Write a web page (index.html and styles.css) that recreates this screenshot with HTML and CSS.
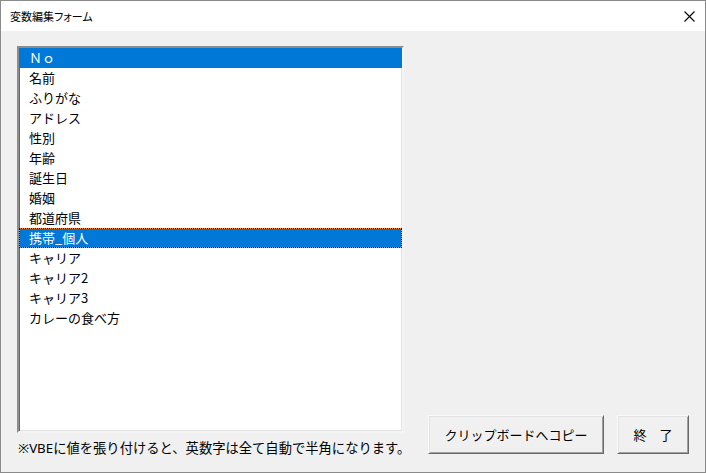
FILE: index.html
```html
<!DOCTYPE html>
<html lang="ja">
<head>
<meta charset="utf-8">
<title>変数編集フォーム</title>
<link rel="stylesheet" href="styles.css">
</head>
<body>
<div class="window">
  <div class="titlebar">
    <span class="title">変数編集フォーム</span>
    <span class="close">
      <svg width="11" height="11" viewBox="0 0 11 11"><path d="M0.5 0.5 L10.5 10.5 M10.5 0.5 L0.5 10.5" stroke="#000" stroke-width="1.1" fill="none"/></svg>
    </span>
  </div>
  <div class="client">
    <div class="left">
      <ul class="listbox">
        <li class="item sel">Ｎｏ</li>
        <li class="item">名前</li>
        <li class="item">ふりがな</li>
        <li class="item">アドレス</li>
        <li class="item">性別</li>
        <li class="item">年齢</li>
        <li class="item">誕生日</li>
        <li class="item">婚姻</li>
        <li class="item">都道府県</li>
        <li class="item sel focus">携帯_個人</li>
        <li class="item">キャリア</li>
        <li class="item">キャリア2</li>
        <li class="item">キャリア3</li>
        <li class="item">カレーの食べ方</li>
      </ul>
      <p class="note">※VBEに値を張り付けると、英数字は全て自動で半角になります。</p>
    </div>
    <div class="right">
      <button class="btn btn-copy">クリップボードへコピー</button>
      <button class="btn btn-end">終　了</button>
    </div>
  </div>
</div>
</body>
</html>
```

FILE: styles.css
```css
* { box-sizing: border-box; }
html, body {
  margin: 0;
  padding: 0;
  background: #f0f0f0;
}
body {
  font-family: "Noto Sans", "Noto Sans CJK JP", sans-serif;
  color: #000;
}
.window {
  width: 706px;
  height: 473px;
  border: 1px solid #8a8a8a;
  background: #f0f0f0;
  display: flex;
  flex-direction: column;
}
.titlebar {
  height: 30px;
  background: #fff;
  display: flex;
  align-items: center;
  justify-content: space-between;
  padding: 0 10px 0 9px;
  flex: none;
}
.title {
  font-size: 11px;
  line-height: 14px;
  font-feature-settings: "palt";
  font-family: "Noto Sans CJK JP", sans-serif;
}
.close {
  display: flex;
  width: 11px;
  height: 11px;
}
.client {
  flex: 1;
  display: flex;
  padding: 15px 0 0 16px;
}
.left {
  display: flex;
  flex-direction: column;
  width: 387px;
}
.listbox {
  list-style: none;
  margin: 0;
  padding: 0;
  width: 387px;
  height: 387px;
  background: #fff;
  border-style: solid;
  border-width: 2px;
  border-color: #8c8c8c #f4f4f4 #f4f4f4 #8c8c8c;
  box-shadow: inset 1px 1px 0 #696969, inset -1px -1px 0 #e3e3e3;
  font-family: "Noto Sans CJK JP", sans-serif;
  font-size: 13px;
}
.item {
  height: 20px;
  line-height: 20px;
  padding-left: 10px;
  white-space: nowrap;
}
.item.sel {
  background: #0078d7;
  color: #fff;
}
.item.focus {
  border: 1px dotted #000;
  line-height: 18px;
  padding-left: 9px;
  background: linear-gradient(#0078d7, #0078d7) padding-box, linear-gradient(#f6882a, #f6882a) border-box;
}
.note {
  margin: 5px 0 0 1px;
  font-family: "Noto Sans", "Noto Sans CJK JP", sans-serif;
  font-size: 13.3px;
  line-height: 20px;
  white-space: nowrap;
}
.right {
  flex: 1;
  display: flex;
  align-items: flex-end;
  padding: 0 16px 18px 24px;
  gap: 13px;
}
.btn {
  height: 39px;
  background: #f0f0f0;
  font-family: "Noto Sans CJK JP", sans-serif;
  font-size: 13px;
  line-height: 1;
  color: #000;
  padding: 0;
  border-style: solid;
  border-width: 1px;
  border-color: #fafafa #696969 #696969 #fafafa;
  box-shadow: inset 1px 1px 0 #e3e3e3, inset -1px -1px 0 #a0a0a0;
  border-radius: 0;
}
.btn-copy { width: 176px; }
.btn-end { width: 72px; }
```
